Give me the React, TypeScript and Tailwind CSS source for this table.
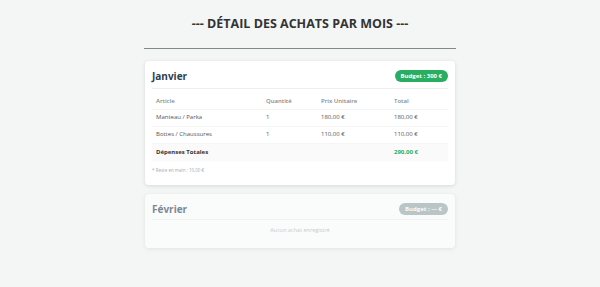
const rows = [
  { article: 'Manteau / Parka', qty: '1', unit: '180,00 €', total: '180,00 €' },
  { article: 'Bottes / Chaussures', qty: '1', unit: '110,00 €', total: '110,00 €' },
]

function Badge({ text, grey }: { text: string; grey?: boolean }) {
  return (
    <span
      className={
        'rounded-full px-[6px] h-[12px] leading-[12px] text-[6px] font-bold text-white ' +
        (grey ? 'bg-[#95a5a6]' : 'bg-[#27ae60]')
      }
    >
      {text}
    </span>
  )
}

export default function App() {
  return (
    <div className="min-h-[287px] w-full bg-[#f4f6f6] flex flex-col items-center font-['Open_Sans',sans-serif]">
      <div className="w-[312px] flex flex-col">
        <h1 className="text-center text-[12.5px] font-bold text-[#333] pt-[14px] pb-[14px] border-b-[1.5px] border-[#7f8c8d] leading-[20px]">
          --- DÉTAIL DES ACHATS PAR MOIS ---
        </h1>

        <div className="mt-[12px] mx-[1px] bg-white rounded-[4px] shadow-[0_1px_4px_rgba(0,0,0,0.12)] px-[7px] pt-[7px] pb-[11px]">
          <div className="flex items-center justify-between pb-[4px] border-b border-[#eef0f0]">
            <span className="text-[10px] font-bold text-[#2c3e50] leading-[16px]">Janvier</span>
            <Badge text="Budget : 300 €" />
          </div>

          <table className="w-full mt-[5px] text-[6px] text-[#555] border-collapse">
            <thead>
              <tr className="text-[#7f8c8d]">
                <th className="text-left font-semibold pl-[4px] h-[15px] w-[114px]">Article</th>
                <th className="text-left font-semibold w-[55px]">Quantité</th>
                <th className="text-left font-semibold w-[73px]">Prix Unitaire</th>
                <th className="text-left font-semibold">Total</th>
              </tr>
            </thead>
            <tbody>
              {rows.map((r) => (
                <tr key={r.article} className="border-t border-[#f5f5f5]">
                  <td className="pl-[4px] h-[17px]">{r.article}</td>
                  <td>{r.qty}</td>
                  <td>{r.unit}</td>
                  <td>{r.total}</td>
                </tr>
              ))}
              <tr className="bg-[#fafafa] border-t border-[#f5f5f5]">
                <td className="pl-[4px] h-[18px] font-bold text-[#333]">Dépenses Totales</td>
                <td></td>
                <td></td>
                <td className="font-bold text-[#27ae60]">290,00 €</td>
              </tr>
            </tbody>
          </table>

          <p className="mt-[6px] text-[4.5px] text-[#aaa]">* Reste en main : 10,00 €</p>
        </div>

        <div className="mt-[9px] mx-[1px] bg-white rounded-[4px] shadow-[0_1px_4px_rgba(0,0,0,0.12)] px-[7px] pt-[8px] pb-[14px] opacity-60">
          <div className="flex items-center justify-between pb-[3px] border-b border-[#eef0f0]">
            <span className="text-[10px] font-bold text-[#2c3e50] leading-[14px]">Février</span>
            <Badge text="Budget : --- €" grey />
          </div>
          <p className="text-center text-[5.5px] text-[#aaa] mt-[6px]">Aucun achat enregistré</p>
        </div>
      </div>
    </div>
  )
}
